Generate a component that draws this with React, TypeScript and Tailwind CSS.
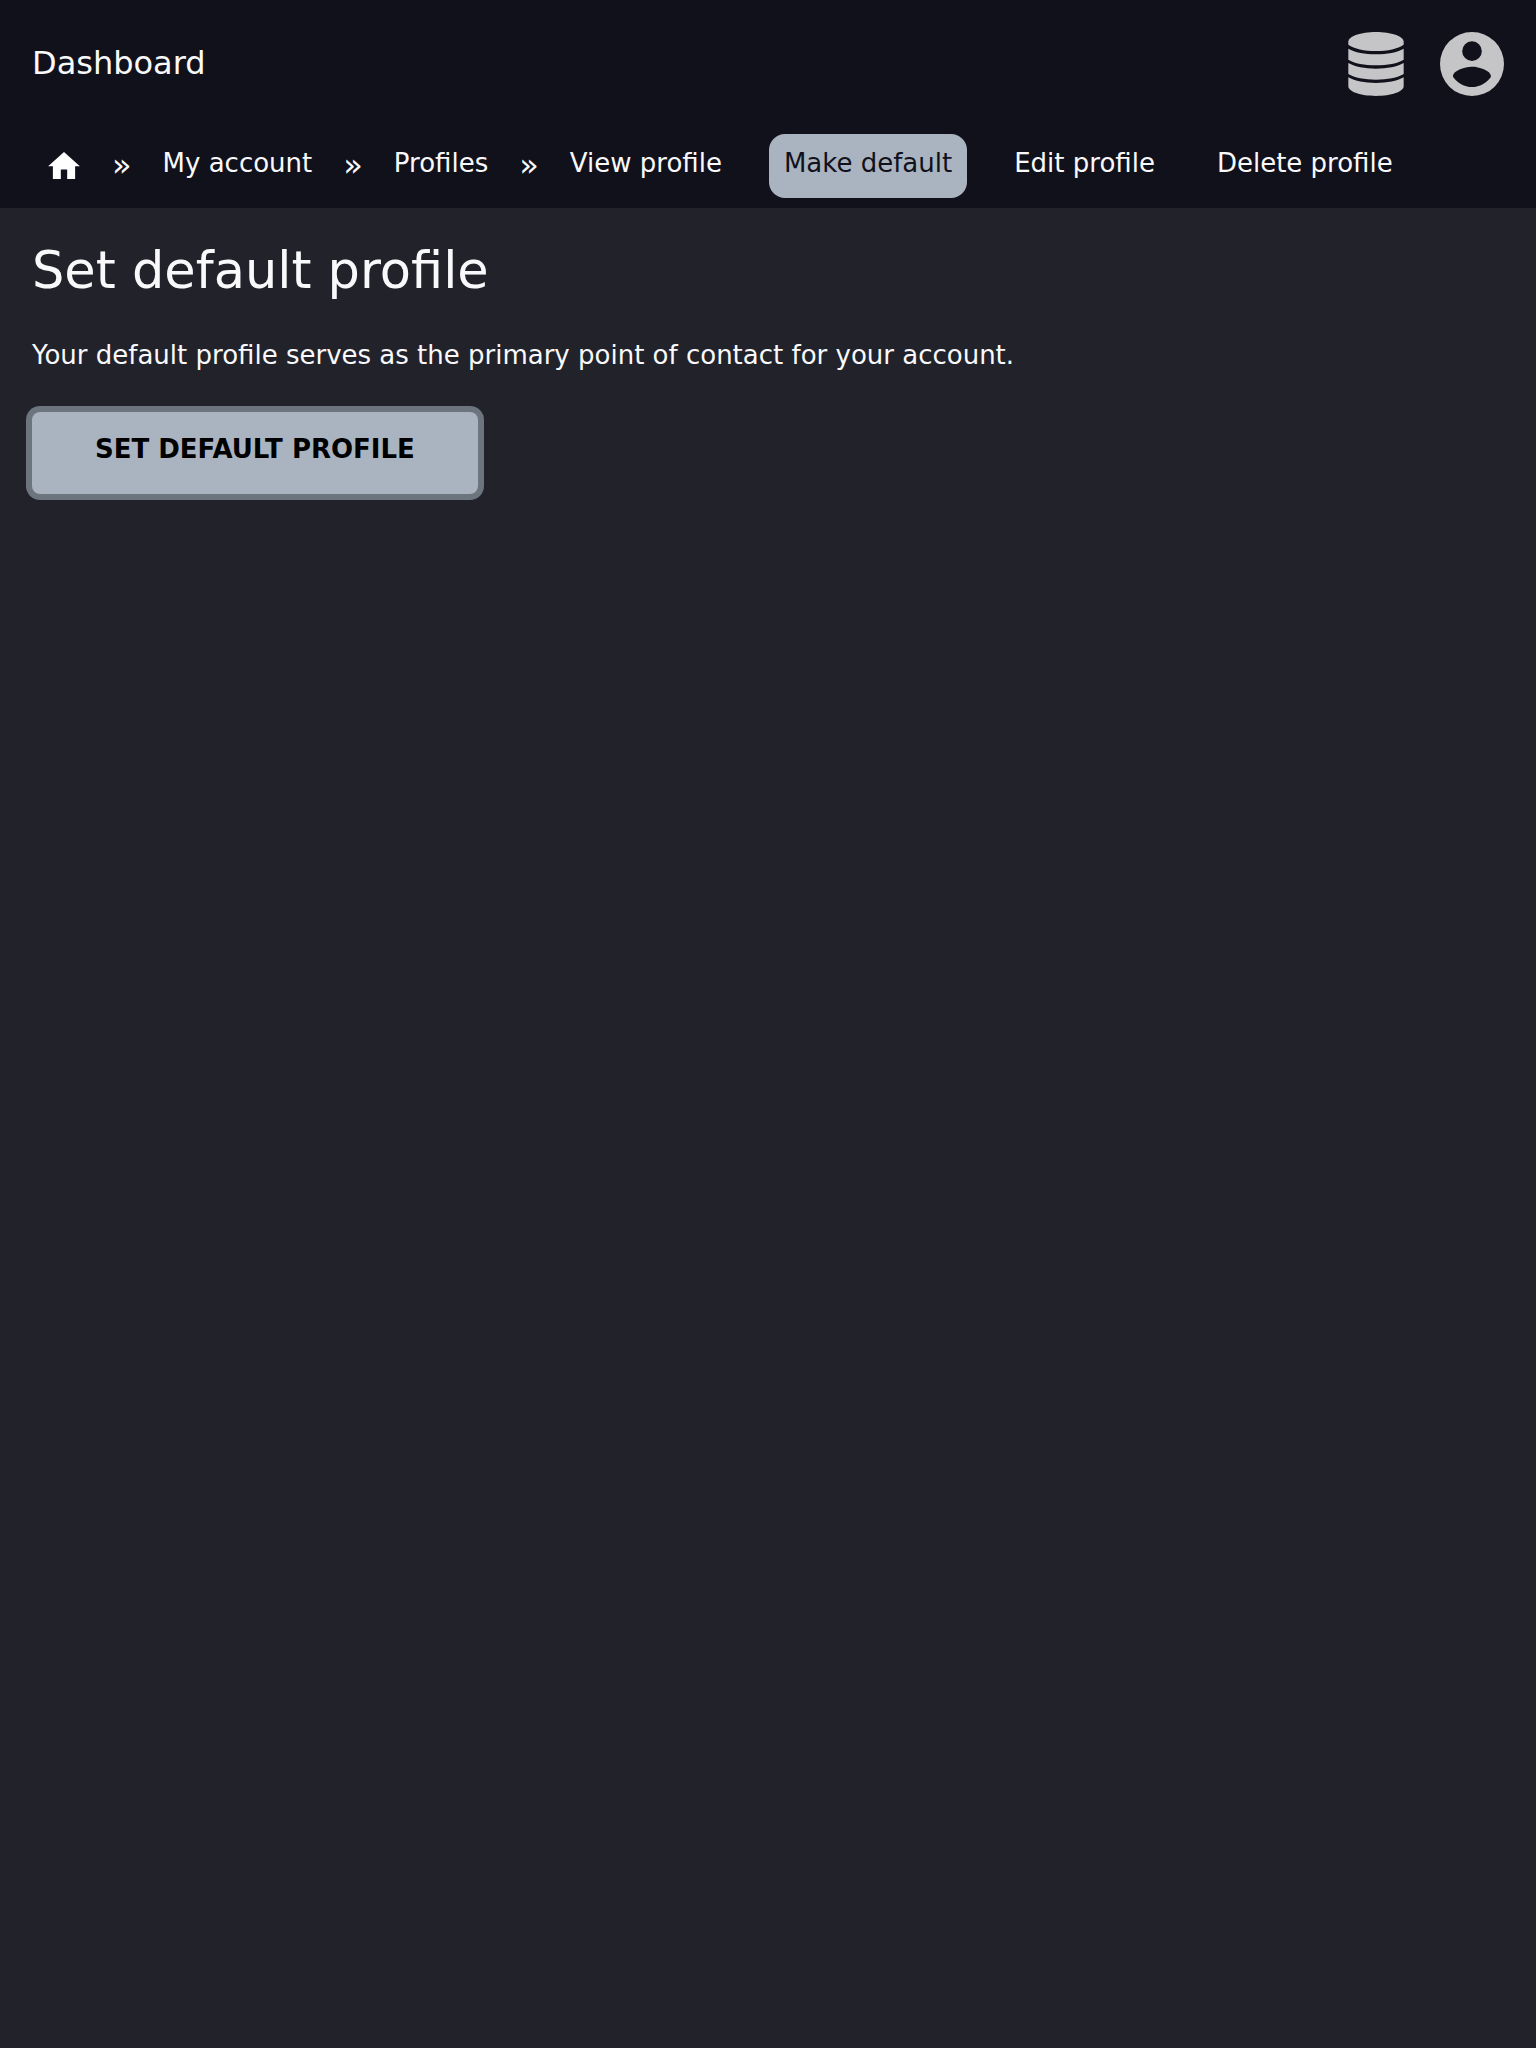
const crumbs = ["My account", "Profiles", "View profile"];

function DatabaseIcon() {
  return (
    <svg viewBox="0 0 168 192" className="h-16 w-14" fill="currentColor" aria-hidden="true">
      <path d="M1 29C1 13 38 0 84 0s83 13 83 29v9c-18 12-47 19-83 19S19 50 1 38z" />
      <path d="M1 50c20 11 49 17 83 17s63-6 83-17v33c-18 11-49 17-83 17S19 94 1 83z" />
      <path d="M1 93c20 11 49 17 83 17s63-6 83-17v33c-18 11-49 17-83 17S19 137 1 126z" />
      <path d="M1 136c20 11 49 17 83 17s63-6 83-17v27c0 16-37 29-83 29S1 179 1 163z" />
    </svg>
  );
}

function AccountIcon() {
  return (
    <svg viewBox="0 0 192 192" className="size-16" fill="currentColor" aria-hidden="true">
      <path
        fillRule="evenodd"
        d="M96 0a96 96 0 1 1 0 192a96 96 0 1 1 0-192zM96 28a29.500 29.500 0 1 0 0 59a29.500 29.500 0 1 0 0-59zM39 134C52 153 73 165 96 165s44-12 57-31C153 115 115 104.500 96 104.500S39 115 39 134z"
      />
    </svg>
  );
}

function HomeIcon() {
  return (
    <svg viewBox="2 3 20 17" className="h-[27px] w-8" fill="#fff" aria-hidden="true">
      <path d="M10 20v-6h4v6h5v-8h3L12 3 2 12h3v8z" />
    </svg>
  );
}

export default function App() {
  return (
    <div className="min-h-screen bg-[#22222b] font-['DejaVu_Sans',sans-serif] text-[26px] leading-8 text-[#f9f9fb]">
      <header className="bg-[#11111b]">
        <div className="flex items-start justify-between px-8 pt-8 pb-[38px]">
          <a href="#dashboard" className="text-[32px] leading-[62px]">Dashboard</a>
          <div className="flex gap-9 text-[#c5c5c7]">
            <button type="button" aria-label="Data">
              <DatabaseIcon />
            </button>
            <button type="button" aria-label="Account">
              <AccountIcon />
            </button>
          </div>
        </div>
        <nav className="flex h-[74px] items-start px-8" aria-label="Breadcrumb">
          <a href="#home" aria-label="Home" className="px-4 pt-[18px]">
            <HomeIcon />
          </a>
          {crumbs.map((label) => (
            <div key={label} className="flex">
              <span className="px-4 pt-[15px] text-[32px]">»</span>
              <a href="#crumb" className="h-16 px-[15px] pt-[13px]">{label}</a>
            </div>
          ))}
          <div className="flex gap-8 pl-8">
            <a href="#default" aria-current="page" className="h-16 rounded-2xl bg-[#a9b4c0] px-[15px] pt-[13px] text-[#11111b]">
              Make default
            </a>
            <a href="#edit" className="h-16 px-[15px] pt-[13px]">Edit profile</a>
            <a href="#delete" className="h-16 px-[15px] pt-[13px]">Delete profile</a>
          </div>
        </nav>
      </header>
      <main className="px-8 pt-8">
        <h1 className="text-[51px] leading-[62px]">Set default profile</h1>
        <p className="mt-[33px] leading-10">Your default profile serves as the primary point of contact for your account.</p>
        <button
          type="button"
          className="mt-[37px] h-[82px] rounded-lg bg-[#a9b4c0] px-[63px] pb-2 font-bold text-black uppercase ring-6 ring-[#6c747d]"
        >
          Set default profile
        </button>
      </main>
    </div>
  );
}
